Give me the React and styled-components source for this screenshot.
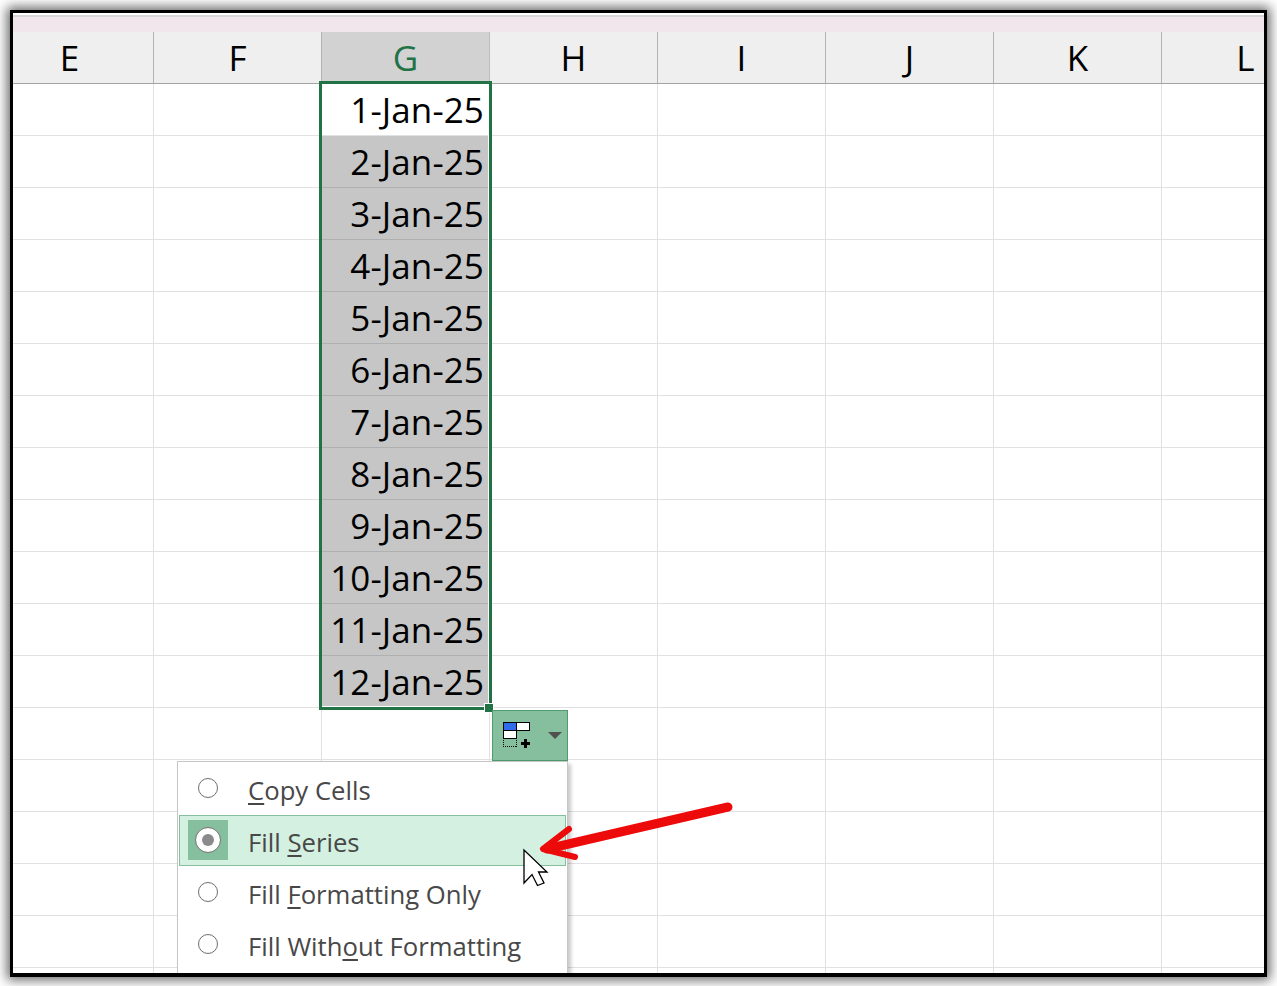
import React from "react";
import styled, { createGlobalStyle } from "styled-components";

const Global = createGlobalStyle`
  html, body { margin: 0; padding: 0; background: #fff; }
  body { font-family: "Open Sans", "Noto Sans", sans-serif; width: 1277px; height: 986px; overflow: hidden; }
`;

const Frame = styled.div`
  position: relative;
  box-sizing: border-box;
  width: 1257px;
  height: 967px;
  margin: 10px 0 0 10px;
  border: 3px solid #000;
  border-bottom-width: 4px;
  overflow: hidden;
  background: #fff;
`;
const Shadow = styled.div`
  position: fixed;
  left: 10px; top: 10px; width: 1257px; height: 967px;
  box-shadow: 0 0 11px 3px rgba(0,0,0,.6);
`;
const Strip = styled.div`
  height: 2px;
  background: #fff;
  border-bottom: 2px solid #d8d8d8;
`;
const Ribbon = styled.div`
  height: 15px;
  background: #f0e6ec;
`;
const Grid = styled.div`
  margin-left: -27px;
  width: 1400px;
`;
const Header = styled.div`
  display: flex;
  height: 52px;
  box-sizing: border-box;
  border-bottom: 1px solid #a3a3a3;
  background: #efefef;
`;
const ColHead = styled.div`
  flex: 0 0 168px;
  box-sizing: border-box;
  border-right: 1px solid ${p => (p.$active ? "#bcbcbc" : "#b3b3b3")};
  background: ${p => (p.$active ? "#d2d2d2" : "#efefef")};
  color: ${p => (p.$active ? "#217346" : "#000")};
  font-size: 35px;
  line-height: 51px;
  text-align: center;
`;
const Row = styled.div`
  display: flex;
  height: 52px;
`;
const Cell = styled.div`
  flex: 0 0 168px;
  box-sizing: border-box;
  border-right: 1px solid ${p => (p.$fill ? "#c6c6c6" : "#e1e1e1")};
  border-bottom: 1px solid ${p => (p.$fill ? "#b0b0b0" : "#e1e1e1")};
  background: ${p => (p.$fill ? "#c6c6c6" : "#fff")};
  color: #000;
  font-size: 35px;
  line-height: 52px;
  text-align: right;
  padding-right: 5px;
  white-space: nowrap;
  overflow: hidden;
  letter-spacing: 0.1px;
`;
const Selection = styled.div`
  position: absolute;
  left: 306px; top: 68px;
  width: 173px; height: 629px;
  box-sizing: border-box;
  border: 3px solid #217346;
  box-shadow: inset -1px -1px 0 #fff;
`;
const Handle = styled.div`
  position: absolute;
  left: 472px; top: 691px;
  width: 8px; height: 8px;
  box-sizing: border-box;
  background: #217346;
  outline: 1px solid #fff;
`;
const FillButton = styled.div`
  position: absolute;
  left: 479px; top: 697px;
  width: 76px; height: 51px;
  box-sizing: border-box;
  background: #86bf9e;
  border: 1px solid #4f9a6f;
  display: flex;
  align-items: center;
  padding-left: 10px;
  gap: 17px;
`;
const Caret = styled.div`
  width: 0; height: 0;
  border-left: 7px solid transparent;
  border-right: 7px solid transparent;
  border-top: 7px solid #505050;
`;
const Menu = styled.div`
  position: absolute;
  left: 164px; top: 748px;
  width: 391px; height: 240px;
  box-sizing: border-box;
  background: #fff;
  border: 1px solid #c6c6c6;
  padding: 1px;
  box-shadow: 3px 3px 4px rgba(0,0,0,.22);
`;
const Item = styled.div`
  display: flex;
  height: ${p => (p.$active ? 51 : 52)}px;
  margin-bottom: ${p => (p.$active ? 1 : 0)}px;
  box-sizing: border-box;
  padding: 4px 0 0 8px;
  border: 1px solid ${p => (p.$active ? "#86bf9e" : "transparent")};
  background: ${p => (p.$active ? "#d3f0e0" : "transparent")};
`;
const IconBox = styled.div`
  width: 40px; height: 40px;
  display: flex;
  align-items: center;
  justify-content: center;
  background: ${p => (p.$active ? "#86bf9e" : "transparent")};
`;
const Radio = styled.div`
  box-sizing: border-box;
  width: ${p => (p.$active ? 26 : 20)}px;
  height: ${p => (p.$active ? 26 : 20)}px;
  border-radius: 50%;
  background: #fff;
  border: 1px solid #6f6f6f;
  display: flex;
  align-items: center;
  justify-content: center;
`;
const Dot = styled.div`
  width: 12px; height: 12px;
  border-radius: 50%;
  background: #8a8a8a;
`;
const Label = styled.div`
  margin-left: 20px;
  padding-top: 1px;
  font-size: 25.7px;
  line-height: 44px;
  color: #484848;
  white-space: nowrap;
`;
const Key = styled.span`
  text-decoration: underline;
  text-decoration-thickness: 2px;
  text-underline-offset: 3px;
`;
const Overlay = styled.svg`
  position: absolute;
  left: -13px; top: -13px;
  width: 1277px; height: 986px;
  pointer-events: none;
`;

const columns = ["E", "F", "G", "H", "I", "J", "K", "L", ""];
const dates = Array.from({ length: 12 }, (_, i) => `${i + 1}-Jan-25`);

const FillIcon = () => (
  <svg width="28" height="27" viewBox="0 0 28 27" shapeRendering="crispEdges">
    <rect x="0.5" y="0.5" width="13" height="8" fill="#2f6bea" stroke="#000" />
    <rect x="13.5" y="0.5" width="13" height="8" fill="#fff" stroke="#000" />
    <rect x="0.5" y="8.5" width="13" height="8" fill="#fff" stroke="#000" />
    <rect x="0.5" y="16.5" width="13" height="8" fill="none" stroke="#000" strokeDasharray="1 1" />
    <path d="M21 17h3v3h3v3h-3v3h-3v-3h-3v-3h3z" fill="#000" />
  </svg>
);

const options = [
  { pre: "", key: "C", post: "opy Cells" },
  { pre: "Fill ", key: "S", post: "eries", active: true },
  { pre: "Fill ", key: "F", post: "ormatting Only" },
  { pre: "Fill With", key: "o", post: "ut Formatting" },
];

export default function App() {
  return (
    <>
      <Global />
      <Shadow />
      <Frame>
        <Strip />
        <Ribbon />
        <Grid>
          <Header>
            {columns.map((c, i) => (
              <ColHead key={i} $active={c === "G"}>{c}</ColHead>
            ))}
          </Header>
          {Array.from({ length: 18 }, (_, r) => (
            <Row key={r}>
              {columns.map((c, i) => (
                <Cell key={i} $fill={c === "G" && r > 0 && r < 12}>
                  {c === "G" ? dates[r] : ""}
                </Cell>
              ))}
            </Row>
          ))}
        </Grid>
        <Selection />
        <Handle />
        <FillButton>
          <FillIcon />
          <Caret />
        </FillButton>
        <Menu>
          {options.map(o => (
            <Item key={o.key} $active={o.active}>
              <IconBox $active={o.active}>
                <Radio $active={o.active}>{o.active && <Dot />}</Radio>
              </IconBox>
              <Label>{o.pre}<Key>{o.key}</Key>{o.post}</Label>
            </Item>
          ))}
        </Menu>
        <Overlay viewBox="0 0 1277 986">
          <path d="M524 850V883L532 874.5L537.5 885.5L544 883L538.5 872H547Z" fill="#fff" stroke="#000" strokeWidth="1.3" strokeLinejoin="miter" />
          <path d="M728 807L547 849" stroke="#ec0a0a" strokeWidth="9" strokeLinecap="round" fill="none" />
          <path d="M569 829L543 849L575 857" stroke="#ec0a0a" strokeWidth="6" strokeLinecap="round" strokeLinejoin="round" fill="none" />
        </Overlay>
      </Frame>
    </>
  );
}
